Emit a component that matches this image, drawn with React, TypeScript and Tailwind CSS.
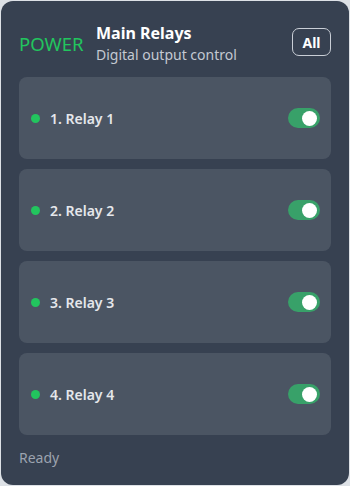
import { useState } from "react";

const relays = ["1. Relay 1", "2. Relay 2", "3. Relay 3", "4. Relay 4"];

function Toggle({ on, onClick }: { on: boolean; onClick: () => void }) {
  return (
    <button
      type="button"
      onClick={onClick}
      className={`flex h-[20px] w-[32px] items-center rounded-full px-[3px] ${
        on ? "justify-end bg-[#38a169]" : "justify-start bg-gray-500"
      }`}
    >
      <span className="h-[15px] w-[15px] rounded-full bg-white" />
    </button>
  );
}

export default function App() {
  const [states, setStates] = useState([true, true, true, true]);

  return (
    <div
      className="h-[486px] w-[350px] bg-[#dde1e6] p-px"
      style={{ fontFamily: '"Noto Sans", "Open Sans", sans-serif' }}
    >
      <div className="flex h-full flex-col rounded-[12px] bg-[#374151] px-[18px]">
        <div className="flex items-center pt-[21px] pb-[11px]">
          <span className="w-[77px] text-[18.5px] leading-[24px] text-[#22c55e]">POWER</span>
          <div className="flex flex-1 flex-col">
            <span className="text-[16px] font-bold leading-[22px] text-white">Main Relays</span>
            <span className="text-[14px] leading-[22px] text-[#c4c9d1]">Digital output control</span>
          </div>
          <button
            type="button"
            onClick={() => setStates(states.map(() => true))}
            className="mt-[-4px] h-[28px] w-[39px] rounded-[7px] border-[1.5px] border-[#c9ced6] text-[14px] font-bold text-white"
          >
            All
          </button>
        </div>

        <div className="flex flex-col gap-[10px]">
          {relays.map((name, i) => (
            <div
              key={name}
              className="flex h-[82px] items-center rounded-[8px] bg-[#4b5563] pl-[12px] pr-[11px]"
            >
              <span className="h-[9px] w-[9px] rounded-full bg-[#22c55e]" />
              <span className="ml-[10px] flex-1 text-[14px] font-semibold text-[#e5e7eb]">{name}</span>
              <Toggle
                on={states[i]}
                onClick={() => setStates(states.map((s, j) => (j === i ? !s : s)))}
              />
            </div>
          ))}
        </div>

        <div className="mt-[12px] text-[14px] text-[#9ca3af]">Ready</div>
      </div>
    </div>
  );
}
